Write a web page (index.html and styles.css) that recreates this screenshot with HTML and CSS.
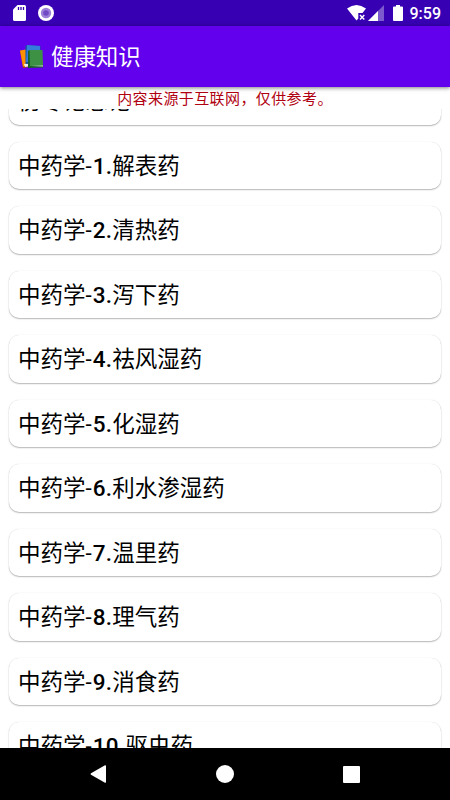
FILE: index.html
```html
<!DOCTYPE html>
<html lang="zh-CN">
<head>
<meta charset="utf-8">
<title>健康知识</title>
<link rel="stylesheet" href="styles.css">
</head>
<body>
<div class="screen">
  <div class="status">
    <svg class="sd" width="13" height="16" viewBox="0 0 13 16"><path fill="#fff" d="M4.500 0H11.500Q13 0 13 1.500V14.500Q13 16 11.500 16H1.500Q0 16 0 14.500V4.500Z"/><path stroke="#3700b3" stroke-width="1.3" d="M5.500 2v3M8 2v3M10.500 2v3"/></svg>
    <svg class="dot" width="16" height="16" viewBox="0 0 16 16"><circle cx="8" cy="8" r="8" fill="#fff"/><circle cx="8" cy="8" r="5.200" fill="#9c7fd9"/><circle cx="8" cy="8" r="2.800" fill="#6f4ac4"/></svg>
    <span class="space"></span>
    <svg class="wifi" width="19" height="16" viewBox="0 0 19 16"><path fill="#fff" d="M0 3.600Q9.500-3.400 19 3.600L15.500 8H11.300V13.500L9.500 15.500Z"/><path stroke="#fff" stroke-width="1.400" d="M13 10l4.300 4.500M17.300 10L13 14.500"/></svg>
    <svg class="signal" width="16" height="16" viewBox="0 0 16 16"><path fill="#fff" fill-opacity=".35" d="M0 16L16 0V16Z"/><path fill="#fff" d="M0 16L10 6V16Z"/></svg>
    <svg class="battery" width="10" height="16" viewBox="0 0 10 16"><path fill="#fff" d="M3 0H7V1.500H9Q10 1.500 10 2.500V15Q10 16 9 16H1Q0 16 0 15V2.500Q0 1.500 1 1.500H3Z"/></svg>
    <span class="time">9:59</span>
  </div>
  <header class="appbar">
    <svg width="24" height="24" viewBox="0 0 24 24"><path fill="#b94b00" d="M0 6l5-1 3 17-5 1z"/><path fill="#ff9000" d="M0 5.500l6-1 3 16-6 1z"/><path fill="#eee" d="M4 19l6-1 1 3-6 1z"/><path fill="#174f9e" d="M5.500 1l2-1 13 1v17l-15 1z"/><path fill="#347ddd" d="M7 0l13 1v16H6z"/><path fill="#ddd" d="M9 20h14v2H9z"/><path fill="#17602a" d="M8 6l2-1 1 16 12 .5v1L8 23z"/><path fill="#3d9145" d="M9.500 5H22.500l.5 15.500-13 .5z"/></svg>
    <h1>健康知识</h1>
  </header>
  <p class="notice">内容来源于互联网，仅供参考。</p>
  <main class="list">
    <div class="card">伤寒论总论</div>
    <div class="card">中药学-<b>1.</b>解表药</div>
    <div class="card">中药学-<b>2.</b>清热药</div>
    <div class="card">中药学-<b>3.</b>泻下药</div>
    <div class="card">中药学-<b>4.</b>祛风湿药</div>
    <div class="card">中药学-<b>5.</b>化湿药</div>
    <div class="card">中药学-<b>6.</b>利水渗湿药</div>
    <div class="card">中药学-<b>7.</b>温里药</div>
    <div class="card">中药学-<b>8.</b>理气药</div>
    <div class="card">中药学-<b>9.</b>消食药</div>
    <div class="card">中药学-<b>10.</b>驱虫药</div>
  </main>
  <nav class="nav">
    <svg class="back" width="16" height="18" viewBox="0 0 16 18"><path fill="#fff" d="M15 .2Q16 0 16 1V17Q16 18 15 17.700L1 9.700Q0 9 1 8.300Z"/></svg>
    <svg width="18" height="18" viewBox="0 0 18 18"><circle cx="9" cy="9" r="9" fill="#fff"/></svg>
    <svg width="17" height="17" viewBox="0 0 17 17"><rect width="17" height="17" rx="1" fill="#fff"/></svg>
  </nav>
</div>
</body>
</html>
```
FILE: styles.css
```css
* { box-sizing: border-box; }
body {
  margin: 0;
  background: #fff;
  font-family: Roboto, "Noto Sans CJK SC", sans-serif;
}
.screen {
  width: 450px;
  height: 800px;
  display: flex;
  flex-direction: column;
  overflow: hidden;
}
.status {
  height: 26px;
  flex: none;
  display: flex;
  align-items: center;
  padding: 0 9px 0 13px;
  background: #3700b3;
  color: #fff;
}
.dot { margin-left: 12px; }
.space { flex: 1; }
.wifi { margin-right: 1px; }
.signal { margin-left: 1px; }
.battery { margin-left: 9px; }
.time {
  margin-left: 7px;
  font-size: 16px;
  font-weight: 500;
  line-height: 26px;
  padding-top: 2px;
}
.appbar {
  height: 61px;
  flex: none;
  display: flex;
  align-items: center;
  gap: 7px;
  padding: 1px 0 0 20px;
  background: #6200ee;
  color: #fff;
  box-shadow: 0 1px 4px rgba(0, 0, 0, .5);
}
.appbar h1 {
  margin: 0;
  font-size: 22.5px;
  font-weight: 400;
  line-height: 32px;
  letter-spacing: -.1px;
}
.notice {
  height: 22px;
  flex: none;
  margin: 0;
  padding: 1px 0 0 0;
  text-align: center;
  font-size: 15px;
  line-height: 22px;
  letter-spacing: .4px;
  color: #b00010;
}
.list {
  flex: 1;
  min-height: 0;
  overflow: hidden;
  display: flex;
  flex-direction: column;
  gap: 17px;
  padding: 0 9px;
}
.card {
  height: 47.5px;
  flex: none;
  padding: 1px 0 0 9px;
  border-radius: 10px;
  background: #fff;
  box-shadow: 0 1px 1.5px rgba(0, 0, 0, .28), 0 0 1px rgba(0, 0, 0, .15);
  font-size: 22.5px;
  line-height: 47.5px;
  color: #000;
}
.card b { margin-left: 1px; font-weight: 500; letter-spacing: .3px; }
.card:first-child { margin-top: -32px; }
.nav {
  height: 52px;
  flex: none;
  display: grid;
  grid-template-columns: repeat(3, 126.500px);
  justify-content: center;
  align-items: center;
  justify-items: center;
  background: #000;
}
.back { margin-right: 2px; }
```
